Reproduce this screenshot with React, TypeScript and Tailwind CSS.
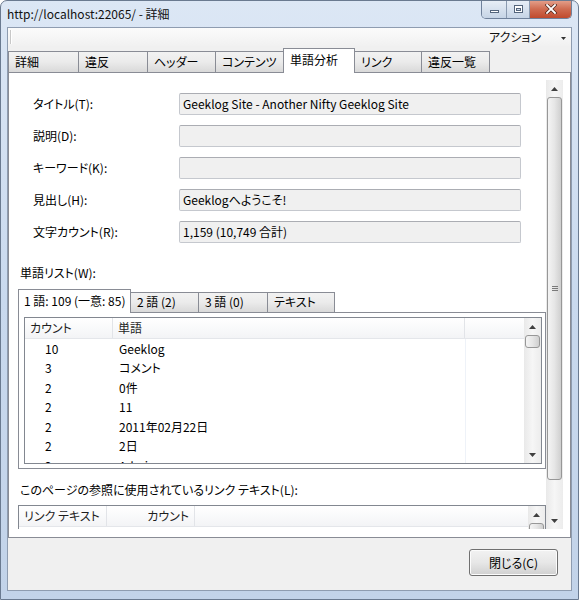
import React from 'react';

const tabs = [
    { label: '詳細', w: 'w-[71px]' },
    { label: '違反', w: 'w-[70px]' },
    { label: 'ヘッダー', w: 'w-[69px]' },
    { label: 'コンテンツ', w: 'w-[69px]' },
    { label: '単語分析', w: 'w-[72px]', active: true },
    { label: 'リンク', w: 'w-[68px]' },
    { label: '違反一覧', w: 'w-[69px]' },
];

const fields = [
    { label: 'タイトル(T):', value: 'Geeklog Site - Another Nifty Geeklog Site' },
    { label: '説明(D):', value: '' },
    { label: 'キーワード(K):', value: '' },
    { label: '見出し(H):', value: 'Geeklogへようこそ!' },
    { label: '文字カウント(R):', value: '1,159 (10,749 合計)' },
];

const wordTabs = [
    { label: '1 語: 109 (一意: 85)', w: 'w-[113px]', active: true },
    { label: '2 語 (2)', w: 'w-[69px]' },
    { label: '3 語 (0)', w: 'w-[70px]' },
    { label: 'テキスト', w: 'w-[68px]' },
];

const words: [string, string][] = [
    ['10', 'Geeklog'],
    ['3', 'コメント'],
    ['2', '0件'],
    ['2', '11'],
    ['2', '2011年02月22日'],
    ['2', '2日'],
    ['2', 'Admin'],
];

function Arrow({ up }: { up?: boolean }) {
    return (
        <svg width="7" height="4" viewBox="0 0 7 4">
            <path d={up ? 'M0 4 L3.5 0 L7 4 Z' : 'M0 0 L3.5 4 L7 0 Z'} fill="#404040" />
        </svg>
    );
}

function Thumb({ className, grip }: { className: string; grip?: boolean }) {
    return (
        <div
            className={`mx-px shrink-0 rounded-[3px] border border-[#979797] bg-gradient-to-r from-[#f4f4f4] via-[#e6e6e6] to-[#cfcfcf] flex items-center justify-center ${className}`}
        >
            {grip && (
                <div className="flex flex-col gap-[1px]">
                    <div className="w-[6px] h-px bg-[#7a7a7a]" />
                    <div className="w-[6px] h-px bg-[#7a7a7a]" />
                    <div className="w-[6px] h-px bg-[#7a7a7a]" />
                </div>
            )}
        </div>
    );
}

function VScroll({ className = '', thumb, grip }: { className?: string; thumb: string; grip?: boolean }) {
    return (
        <div
            className={`w-[17px] shrink-0 flex flex-col bg-gradient-to-r from-[#e9e9e9] via-[#f6f6f6] to-[#ececec] ${className}`}
        >
            <div className="h-[17px] shrink-0 flex items-center justify-center">
                <Arrow up />
            </div>
            <div className="flex-1 min-h-0 flex flex-col overflow-hidden">
                <Thumb className={thumb} grip={grip} />
            </div>
            <div className="h-[17px] shrink-0 flex items-center justify-center">
                <Arrow />
            </div>
        </div>
    );
}

function TextBox({ value }: { value: string }) {
    return (
        <div className="w-[342px] h-[22px] rounded-[2px] border border-[#c5c8ce] border-t-[#abadb3] bg-[#f0f0f0] pl-[3px] flex items-center">
            <span className="leading-[16px] whitespace-nowrap">{value}</span>
        </div>
    );
}

function WordList() {
    return (
        <div className="h-[147px] border border-[#828790] bg-white flex overflow-hidden">
            <div className="flex-1 min-w-0 flex flex-col">
                <div className="h-[21px] shrink-0 flex bg-gradient-to-b from-white to-[#f3f4f6] border-b border-[#e4e6ea] text-[#1e1e1e]">
                    <div className="w-[88px] pl-[5px] flex items-center border-r border-[#e2e4e8]">カウント</div>
                    <div className="w-[352px] pl-[5px] flex items-center border-r border-[#e2e4e8]">単語</div>
                    <div className="flex-1" />
                </div>
                <div className="flex-1 min-h-0 flex overflow-hidden">
                    <div className="w-[440px]">
                        {words.map(([c, w], i) => (
                            <div key={i} className="h-[19.5px] flex items-center">
                                <div className="w-[88px] pl-[20px]">{c}</div>
                                <div className="pl-[6px]">{w}</div>
                            </div>
                        ))}
                    </div>
                    <div className="w-px bg-[#eef2f8]" />
                </div>
            </div>
            <VScroll thumb="h-[13px]" />
        </div>
    );
}

function LinkList() {
    return (
        <div className="h-[80px] border border-[#828790] bg-white flex overflow-hidden">
            <div className="flex-1 min-w-0 flex flex-col">
                <div className="h-[21px] shrink-0 flex bg-gradient-to-b from-white to-[#f3f4f6] border-b border-[#e4e6ea] text-[#1e1e1e] whitespace-nowrap">
                    <div className="w-[88px] pl-[5px] flex items-center border-r border-[#e2e4e8]">リンク テキスト</div>
                    <div className="w-[88px] pr-[5px] flex items-center justify-end border-r border-[#e2e4e8]">カウント</div>
                    <div className="flex-1" />
                </div>
            </div>
            <VScroll thumb="h-[14px]" />
        </div>
    );
}

export default function App() {
    return (
        <div className="w-[579px] h-[600px] overflow-hidden rounded-t-[7px] border border-[#6a7a90] bg-gradient-to-b from-[#dce7f5] via-[#c9d9ee] to-[#c2d3e9] flex flex-col px-[6px] pb-[8px] text-[12px] leading-[16px] text-black font-['Noto_Sans_CJK_JP',sans-serif] [font-feature-settings:'palt']">
            {/* Title bar */}
            <div className="h-[26px] shrink-0 flex items-start justify-between">
                <div className="pt-[5px] text-[#111] whitespace-nowrap">http://localhost:22065/ - 詳細</div>
                <div className="flex h-[19px] -mt-px rounded-b-[5px] border border-t-0 border-[#6f819b] overflow-hidden">
                    <div className="w-[25px] bg-gradient-to-b from-[#e9eff7] to-[#c6d4e6] border-r border-[#8a9ab0] flex items-center justify-center">
                        <div className="w-[9px] h-[3px] mt-[4px] bg-white border border-[#54657c]" />
                    </div>
                    <div className="w-[23px] bg-gradient-to-b from-[#e9eff7] to-[#c6d4e6] border-r border-[#8a9ab0] flex items-center justify-center">
                        <div className="w-[9px] h-[8px] border border-[#54657c] bg-white flex items-center justify-center">
                            <div className="w-[5px] h-[3px] mt-px border border-[#54657c] bg-[#cfdcec]" />
                        </div>
                    </div>
                    <div className="w-[41px] bg-gradient-to-b from-[#e5a38f] via-[#cf6c51] to-[#c04a2d] flex items-center justify-center">
                        <svg width="12" height="10" viewBox="0 0 12 10">
                            <path d="M2 1 L10 9 M10 1 L2 9" stroke="#4a2318" strokeWidth="3.2" strokeLinecap="square" />
                            <path d="M2 1 L10 9 M10 1 L2 9" stroke="#ffffff" strokeWidth="1.8" strokeLinecap="square" />
                        </svg>
                    </div>
                </div>
            </div>

            {/* Client */}
            <div className="flex-1 min-h-0 border border-[#8e9cb0] bg-[#f0f0f0] flex flex-col">
                {/* Toolbar */}
                <div className="h-[18px] shrink-0 bg-gradient-to-b from-[#fbfbfb] to-[#f1f1f1] flex items-center">
                    <div className="ml-[2px] w-[2px] h-[14px] border-l border-[#c8c8c8] border-r border-r-white" />
                    <div className="flex-1" />
                    <div className="mr-[20px] text-[#111]">アクション</div>
                    <div className="mr-[5px] mt-[2px]">
                        <svg width="5" height="3" viewBox="0 0 5 3">
                            <path d="M0 0 L2.5 3 L5 0 Z" fill="#333" />
                        </svg>
                    </div>
                </div>

                {/* Tabs */}
                <div className="h-[27px] shrink-0 mb-[-1px] flex items-end relative z-10 whitespace-nowrap">
                    {tabs.map((t, i) =>
                        t.active ? (
                            <div
                                key={t.label}
                                className={`${t.w} h-[25px] -ml-px relative z-10 bg-white border border-b-0 border-[#898c95] pl-[6px] pt-[3px]`}
                            >
                                {t.label}
                            </div>
                        ) : (
                            <div
                                key={t.label}
                                className={`${t.w} h-[21px] mb-px ${i === 0 ? '' : '-ml-px'} border border-b-0 border-[#898c95] bg-gradient-to-b from-[#f2f2f2] via-[#ebebeb] to-[#d9d9d9] pl-[6px] pt-[2px]`}
                            >
                                {t.label}
                            </div>
                        ),
                    )}
                </div>

                {/* Panel */}
                <div className="h-[466px] shrink-0 border border-[#898c95] bg-white flex pt-[7px] pb-[8px] pr-[7px]">
                    <div className="w-[537px] h-[449px] overflow-hidden pl-[9px]">
                        <div className="flex flex-col gap-[10px] mt-[13px] pl-[15px]">
                            {fields.map((f) => (
                                <div key={f.label} className="flex items-center">
                                    <div className="w-[146px]">{f.label}</div>
                                    <TextBox value={f.value} />
                                </div>
                            ))}
                        </div>

                        <div className="mt-[22px] pl-[2px]">単語リスト(W):</div>

                        {/* Word tabs */}
                        <div className="mt-[8px] h-[24px] flex items-end relative z-10 mb-[-1px] whitespace-nowrap">
                            {wordTabs.map((t) =>
                                t.active ? (
                                    <div
                                        key={t.label}
                                        className={`${t.w} h-[24px] relative z-10 bg-white border border-b-0 border-[#898c95] pl-[5px] pt-[3px]`}
                                    >
                                        {t.label}
                                    </div>
                                ) : (
                                    <div
                                        key={t.label}
                                        className={`${t.w} h-[20px] mb-px -ml-px border border-b-0 border-[#898c95] bg-gradient-to-b from-[#f2f2f2] via-[#ebebeb] to-[#d9d9d9] pl-[6px] pt-[1px]`}
                                    >
                                        {t.label}
                                    </div>
                                ),
                            )}
                        </div>
                        <div className="w-[528px] h-[157px] border border-[#898c95] bg-white pt-[4px] pl-[5px] pr-[3px]">
                            <WordList />
                        </div>

                        <div className="mt-[13px] pl-[2px] whitespace-nowrap">このページの参照に使用されているリンク テキスト(L):</div>
                        <div className="mt-[7px] w-[528px]">
                            <LinkList />
                        </div>
                    </div>
                    <VScroll thumb="h-[383px]" grip />
                </div>

                {/* Bottom buttons */}
                <div className="flex-1 flex justify-end items-start pt-[11px] pr-[13px]">
                    <div className="w-[89px] h-[27px] rounded-[3px] border border-[#707070] bg-gradient-to-b from-[#f2f2f2] via-[#e7e7e7] to-[#d0d0d0] flex items-center justify-center shadow-[inset_0_0_0_1px_#fcfcfc]">
                        閉じる(C)
                    </div>
                </div>
            </div>
        </div>
    );
}
